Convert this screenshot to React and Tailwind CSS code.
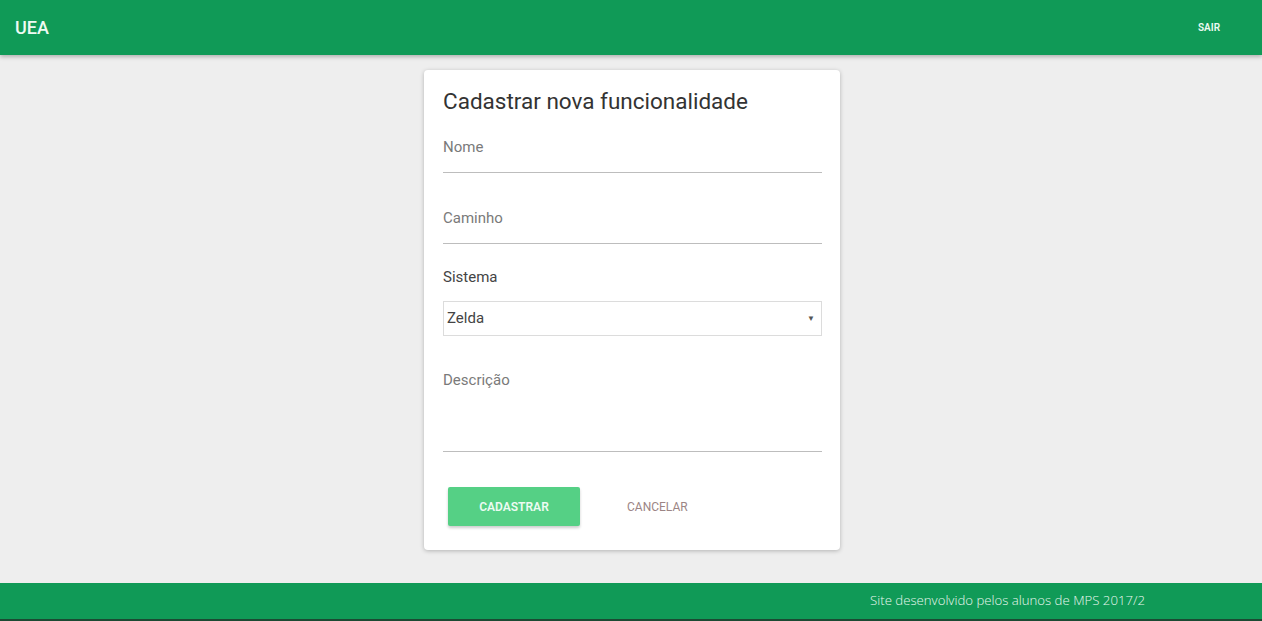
import React from 'react';

function Field({ label, className = '' }) {
    return (
        <div className={`border-b border-[#bdbdbd] ${className}`}>
            <div className="h-[20px] text-[15px] leading-[20px] text-[#7a7a7a]">{label}</div>
        </div>
    );
}

export default function App() {
    return (
        <div className="min-h-[621px] flex flex-col bg-[#eeeeee] font-['Roboto',sans-serif]">
            {/* Header */}
            <header className="h-[55px] bg-[#109a57] flex items-center justify-between pl-[15px] pr-[42px] shadow-[0_2px_4px_rgba(0,0,0,0.25)] z-10">
                <span className="text-[18px] font-medium text-[#eefaf3]">UEA</span>
                <button className="text-[10px] font-semibold text-[#eefaf3]">SAIR</button>
            </header>

            {/* Card */}
            <main className="flex-1 flex justify-center pt-[15px] pb-[33px] pl-[2px]">
                <div className="w-[416px] bg-white rounded-[4px] shadow-[0_1px_4px_rgba(0,0,0,0.25)] pt-[16px] pl-[19px] pr-[18px] pb-[24px]">
                    <h1 className="h-[30px] text-[22.5px] leading-[30px] text-[#333]">Cadastrar nova funcionalidade</h1>

                    <Field label="Nome" className="pt-[21px] pb-[15px]" />
                    <Field label="Caminho" className="mt-[35px] pb-[15px]" />

                    <div className="mt-[23px] h-[20px] text-[15px] leading-[20px] text-[#444]">Sistema</div>
                    <div className="mt-[14px] h-[35px] border border-[#dcdcdc] flex items-center justify-between pl-[3px] pr-[6px]">
                        <span className="text-[15px] text-[#444]">Zelda</span>
                        <span className="text-[8px] text-[#555]">▼</span>
                    </div>

                    <Field label="Descrição" className="mt-[34px] pb-[61px]" />

                    <div className="mt-[35px] flex items-center pl-[5px]">
                        <button className="w-[132px] h-[39px] bg-[#55d085] rounded-[2px] shadow-[0_2px_3px_rgba(0,0,0,0.2)] text-[12px] font-semibold text-[#ecfbf2]">
                            CADASTRAR
                        </button>
                        <button className="ml-[47px] text-[12px] text-[#9c8585]">CANCELAR</button>
                    </div>
                </div>
            </main>

            {/* Footer */}
            <footer className="h-[38px] bg-[#109a57] border-b-2 border-[#1b4a33] flex items-center justify-end pr-[117px]">
                <span className="font-['Open_Sans',sans-serif] font-light text-[13.2px] text-[#e8f7ee]">
                    Site desenvolvido pelos alunos de MPS 2017/2
                </span>
            </footer>
        </div>
    );
}
